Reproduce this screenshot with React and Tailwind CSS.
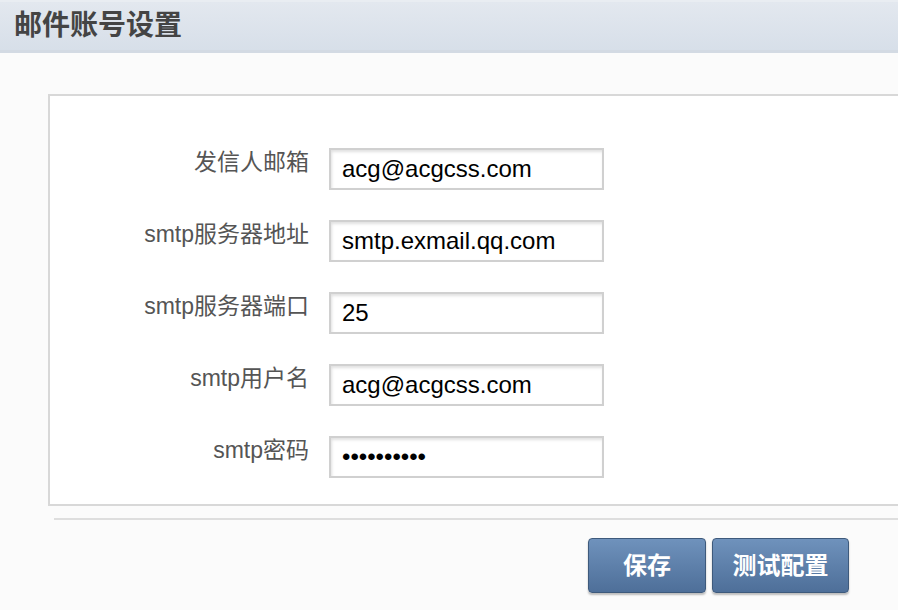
const fields = [
  { label: '发信人邮箱', value: 'acg@acgcss.com', type: 'text' },
  { label: 'smtp服务器地址', value: 'smtp.exmail.qq.com', type: 'text' },
  { label: 'smtp服务器端口', value: '25', type: 'text' },
  { label: 'smtp用户名', value: 'acg@acgcss.com', type: 'text' },
  { label: 'smtp密码', value: '1234567890', type: 'password' },
]

const font = { fontFamily: '"Liberation Sans", "Noto Sans CJK SC", sans-serif' }

function FieldRow({ label, value, type }) {
  return (
    <div className="flex items-start gap-[20px]">
      <label className="w-[259px] text-right text-[23px] leading-[28px] text-[#555]">
        {label}
      </label>
      <input
        type={type}
        defaultValue={value}
        className="h-[42px] w-[275px] border-2 border-[#d0d0d0] bg-white px-[11px] text-[24px] text-black shadow-[inset_1px_2px_3px_rgba(0,0,0,0.12)] outline-none"
      />
    </div>
  )
}

export default function App() {
  return (
    <div className="min-h-[610px] w-full overflow-hidden bg-[#fbfbfb]" style={font}>
      <div className="h-[53px] border-b-[3px] border-[#d3dae3] border-t-2 border-t-[#e9edf2] bg-gradient-to-b from-[#e3e8ef] to-[#d7dfe9] pl-[14px]">
        <h1 className="text-[28px] font-semibold leading-[48px] text-[#444]">邮件账号设置</h1>
      </div>

      <div className="ml-[48px] mr-[-20px] mt-[41px] border-2 border-[#d8d8d8] bg-white pb-[26px] pt-[52px]">
        <div className="flex flex-col gap-[30px]">
          {fields.map((f) => (
            <FieldRow key={f.label} {...f} />
          ))}
        </div>
      </div>

      <div className="ml-[54px] mt-[12px] h-[2px] bg-[#dedede]" />

      <div className="mr-[49px] mt-[18px] flex justify-end gap-[6px]">
        <button className="h-[55px] w-[118px] rounded-[4px] border border-[#3e5a7c] bg-gradient-to-b from-[#6f92bc] to-[#4e6f99] text-[24px] font-bold text-white shadow-[0_2px_2px_rgba(0,0,0,0.25)]">
          保存
        </button>
        <button className="h-[55px] w-[137px] rounded-[4px] border border-[#3e5a7c] bg-gradient-to-b from-[#6f92bc] to-[#4e6f99] text-[24px] font-bold text-white shadow-[0_2px_2px_rgba(0,0,0,0.25)]">
          测试配置
        </button>
      </div>
    </div>
  )
}
